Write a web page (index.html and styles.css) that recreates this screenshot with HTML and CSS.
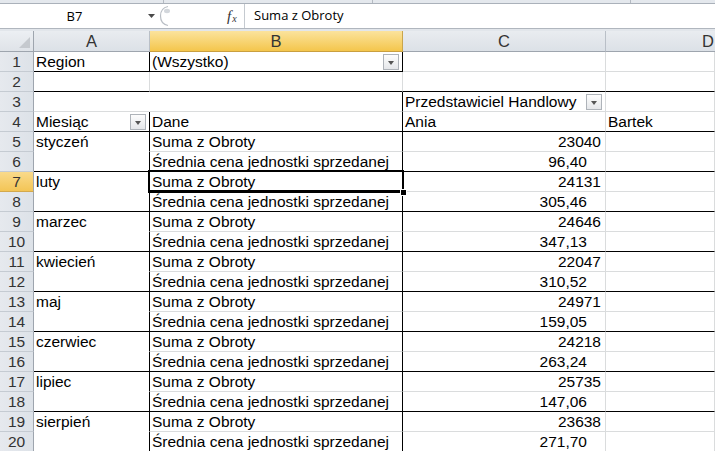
FILE: index.html
```html
<!DOCTYPE html>
<html lang="pl">
<head>
<meta charset="utf-8">
<title>Tabela przestawna</title>
<link rel="stylesheet" href="styles.css">
</head>
<body>
<div class="top"><div class="seg s1"></div><div class="seg s2"></div><div class="seg s3"></div><div class="seg s4"></div></div>
<div class="fbar">
  <div class="namebox">B7</div>
  <div class="nbarrow"><svg width="7" height="4" viewBox="0 0 7 4"><path d="M0 0h7L3.5 4z" fill="#4a4a4a"/></svg></div>
  <div class="grip"><svg width="16" height="22" viewBox="0 0 16 22"><path d="M9 1.5C4 2.5 1.5 6.5 1.5 11S4 19.5 9 20.5" fill="none" stroke="#b9bec5" stroke-width="1.2"/><ellipse cx="8" cy="6" rx="3" ry="2.2" fill="#d3d7dc"/></svg></div>
  <div class="fx"><span class="f">f</span><span class="x">x</span></div>
  <div class="formula">Suma z Obroty</div>
</div>
<div class="gap"></div>
<div class="sheet">
  <div class="corner"><svg width="11" height="11" viewBox="0 0 11 11"><path d="M11 0V11H0z" fill="#c5c9ce"/></svg></div>
  <div class="ch">A</div><div class="ch sel">B</div><div class="ch">C</div><div class="ch last">D</div>

  <div class="rh">1</div>
  <div class="c R B">Region</div>
  <div class="c R B">(Wszystko)<span class="dd"></span></div>
  <div class="c"></div><div class="c"></div>

  <div class="rh">2</div>
  <div class="c B"></div><div class="c B"></div><div class="c B"></div><div class="c B"></div>

  <div class="rh">3</div>
  <div class="c nor"></div>
  <div class="c R"></div>
  <div class="c">Przedstawiciel Handlowy<span class="dd"></span></div>
  <div class="c"></div>

  <div class="rh">4</div>
  <div class="c R B">Miesiąc<span class="dd"></span></div>
  <div class="c R B">Dane</div>
  <div class="c B">Ania</div>
  <div class="c B">Bartek</div>

  <div class="rh">5</div>
  <div class="c R nob">styczeń</div><div class="c R">Suma z Obroty</div><div class="c num">23040</div><div class="c"></div>
  <div class="rh">6</div>
  <div class="c R B"></div><div class="c R B">Średnia cena jednostki sprzedanej</div><div class="c num dec B">96,40</div><div class="c B"></div>

  <div class="rh sel">7</div>
  <div class="c R nob">luty</div><div class="c R active">Suma z Obroty<span class="handle"></span></div><div class="c num">24131</div><div class="c"></div>
  <div class="rh">8</div>
  <div class="c R B"></div><div class="c R B">Średnia cena jednostki sprzedanej</div><div class="c num dec B">305,46</div><div class="c B"></div>

  <div class="rh">9</div>
  <div class="c R nob">marzec</div><div class="c R">Suma z Obroty</div><div class="c num">24646</div><div class="c"></div>
  <div class="rh">10</div>
  <div class="c R B"></div><div class="c R B">Średnia cena jednostki sprzedanej</div><div class="c num dec B">347,13</div><div class="c B"></div>

  <div class="rh">11</div>
  <div class="c R nob">kwiecień</div><div class="c R">Suma z Obroty</div><div class="c num">22047</div><div class="c"></div>
  <div class="rh">12</div>
  <div class="c R B"></div><div class="c R B">Średnia cena jednostki sprzedanej</div><div class="c num dec B">310,52</div><div class="c B"></div>

  <div class="rh">13</div>
  <div class="c R nob">maj</div><div class="c R">Suma z Obroty</div><div class="c num">24971</div><div class="c"></div>
  <div class="rh">14</div>
  <div class="c R B"></div><div class="c R B">Średnia cena jednostki sprzedanej</div><div class="c num dec B">159,05</div><div class="c B"></div>

  <div class="rh">15</div>
  <div class="c R nob">czerwiec</div><div class="c R">Suma z Obroty</div><div class="c num">24218</div><div class="c"></div>
  <div class="rh">16</div>
  <div class="c R B"></div><div class="c R B">Średnia cena jednostki sprzedanej</div><div class="c num dec B">263,24</div><div class="c B"></div>

  <div class="rh">17</div>
  <div class="c R nob">lipiec</div><div class="c R">Suma z Obroty</div><div class="c num">25735</div><div class="c"></div>
  <div class="rh">18</div>
  <div class="c R B"></div><div class="c R B">Średnia cena jednostki sprzedanej</div><div class="c num dec B">147,06</div><div class="c B"></div>

  <div class="rh">19</div>
  <div class="c R nob">sierpień</div><div class="c R">Suma z Obroty</div><div class="c num">23638</div><div class="c"></div>
  <div class="rh">20</div>
  <div class="c R B"></div><div class="c R B">Średnia cena jednostki sprzedanej</div><div class="c num dec B">271,70</div><div class="c B"></div>
</div>
</body>
</html>
```

FILE: styles.css
```css
* { box-sizing: border-box; }
html, body { margin: 0; padding: 0; }
body {
  width: 715px;
  height: 451px;
  overflow: hidden;
  background: #fff;
  font-family: "Liberation Sans", Arial, sans-serif;
  color: #000;
}

/* ribbon remnant */
.top {
  height: 4px;
  display: flex;
  background: #e4e8ed;
  border-bottom: 1px solid #aab1ba;
}
.seg { height: 100%; border-right: 1px solid #b4bac2; }
.s1 { width: 164px; }
.s2 { width: 209px; }
.s3 { width: 258px; }
.s4 { flex: 1; border-right: none; }

/* formula bar */
.fbar {
  height: 24px;
  display: flex;
  align-items: center;
  background: #fff;
  font-family: "Open Sans", "Noto Sans", sans-serif;
  font-size: 13px;
}
.namebox {
  width: 145px;
  text-align: center;
  padding-left: 4px;
}
.nbarrow { width: 12px; display: flex; align-items: center; padding-left: 3px; padding-bottom: 1px; }
.grip { width: 70px; height: 24px; display: flex; align-items: center; padding-left: 2px; }
.fx {
  width: 17px;
  height: 24px;
  display: flex;
  align-items: center;
  font-family: "Liberation Serif", serif;
  font-style: italic;
  color: #333;
}
.fx .f { font-size: 15px; }
.fx .x { font-size: 10px; margin-top: 4px; margin-left: 1px; }
.formula {
  flex: 1;
  height: 24px;
  line-height: 23px;
  border-left: 1px solid #c5cad0;
  padding-left: 9px;
}
.gap {
  height: 3px;
  background: #e2e6eb;
  border-top: 1px solid #b0b6be;
}

/* sheet grid */
.sheet {
  width: 715px;
  display: grid;
  grid-template-columns: 34px 116px 253px 203px 1fr;
  grid-template-rows: 21px repeat(20, 20px);
  font-size: 15.5px;
  overflow: hidden;
}
.corner {
  background: linear-gradient(#eceff3, #dfe3e8);
  border-right: 1px solid #9ea5ae;
  border-bottom: 1px solid #9ea5ae;
  display: flex;
  align-items: flex-end;
  justify-content: flex-end;
  padding: 0 3px 3px 0;
}
.ch {
  background: linear-gradient(#e9ecf0, #dce1e7);
  border-right: 1px solid #b9bfc7;
  border-bottom: 1px solid #9ea5ae;
  text-align: center;
  font-size: 16.5px;
  line-height: 20px;
  color: #333;
}
.ch.last {
  text-align: right;
  border-right: none;
  padding-right: 1px;
}
.ch.sel {
  background: linear-gradient(#fbe39d, #f4c64c);
  border-right-color: #c9a54c;
  border-bottom-color: #c99f3f;
}
.rh {
  background: linear-gradient(90deg, #e6e9ee, #dde2e8);
  border-right: 1px solid #9ea5ae;
  border-bottom: 1px solid #c5cbd2;
  text-align: center;
  line-height: 20px;
  color: #333;
  font-size: 15.5px;
}
.rh.sel {
  background: linear-gradient(#f9da8b, #f3c556);
  border-bottom-color: #d3a94d;
}

.c {
  border-right: 1px solid #dadcdd;
  border-bottom: 1px solid #dadcdd;
  padding: 0 3px 0 2px;
  line-height: 20px;
  white-space: nowrap;
  display: flex;
  align-items: center;
  position: relative;
  min-width: 0;
}
.c.R { border-right-color: #000; }
.c.B { border-bottom-color: #000; }
.c.nob { border-bottom-color: #fff; }
.c.nor { border-right-color: #fff; }
.c.num { justify-content: flex-end; padding-right: 4px; }
.c.dec { padding-right: 18px; }

/* filter dropdown buttons */
.dd {
  margin-left: auto;
  width: 16px;
  height: 16px;
  border: 1px solid #aeb3b9;
  background: linear-gradient(#fdfdfd, #e5e7ea);
  position: relative;
  flex: none;
}
.dd::after {
  content: "";
  position: absolute;
  left: 4px;
  top: 6px;
  border-left: 3.5px solid transparent;
  border-right: 3.5px solid transparent;
  border-top: 4px solid #555;
}

/* active cell */
.active { z-index: 2; }
.active::before {
  content: "";
  position: absolute;
  left: -2px;
  top: -2px;
  right: -2px;
  bottom: -2px;
  border: 2px solid #000;
  border-bottom-width: 3px;
  pointer-events: none;
}
.handle {
  position: absolute;
  right: -5px;
  bottom: -5px;
  width: 7px;
  height: 7px;
  background: #000;
  border: 1px solid #fff;
  z-index: 3;
}
```
